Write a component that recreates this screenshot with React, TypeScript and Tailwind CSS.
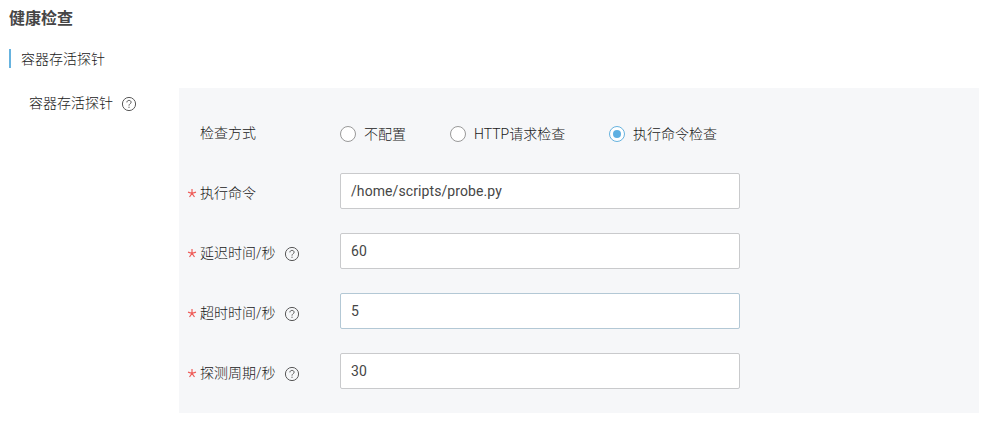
function Help() {
  return (
    <svg width="16" height="16" viewBox="0 0 16 16" fill="none" stroke="#595959" strokeWidth="1" className="shrink-0">
      <circle cx="8" cy="8" r="6.6" />
      <path d="M5.900 6.400C5.900 5.100 6.800 4.400 8 4.400s2.100.7 2.100 1.900C10.100 7.700 8 7.800 8 9.600M8 10.700v1.200" />
    </svg>
  );
}

function Required() {
  return (
    <svg width="10" height="10" viewBox="0 0 10 10" fill="none" stroke="#ee5f5b" strokeWidth="1.2" className="mr-[3px] -mt-px shrink-0">
      <path d="M5 1v4.300M1 4.100L5 5.300l4-1.200M2.500 9L5 5.300L7.500 9" />
    </svg>
  );
}

const radios = [
  { label: "不配置", width: "w-[110px]", checked: false },
  { label: "HTTP请求检查", width: "w-[159px]", checked: false },
  { label: "执行命令检查", width: "w-[120px]", checked: true },
];

const fields = [
  { label: "执行命令", value: "/home/scripts/probe.py", help: false, border: "border-[#c9cacc]" },
  { label: "延迟时间/秒", value: "60", help: true, border: "border-[#c9cacc]" },
  { label: "超时时间/秒", value: "5", help: true, border: "border-[#b3c8d5]" },
  { label: "探测周期/秒", value: "30", help: true, border: "border-[#c9cacc]" },
];

export default function App() {
  return (
    <main className="h-[423px] w-[992px] overflow-hidden bg-white font-[Roboto,'Noto_Sans_CJK_SC',sans-serif] text-sm leading-5 font-light text-[#181818]">
      <h1 className="pt-2 pl-[9px] text-base leading-[22px] font-bold text-[#464646]">健康检查</h1>
      <h2 className="mt-[19px] ml-[9px] h-[19px] border-l-2 border-[#67b3df] pl-[10px] leading-[21px]">容器存活探针</h2>
      <section className="mt-5 flex">
        <div className="flex h-8 w-[179px] items-center gap-2 pl-[29px]">
          <span className="-mt-0.5">容器存活探针</span><Help />
        </div>
        <div className="h-[325px] w-[800px] bg-[#f6f7f9] pt-[31px]">
          <div className="flex h-[30px] items-center">
            <div className="-mt-0.5 w-[161px] pl-[21px]">检查方式</div>
            {radios.map((r) => (
              <label key={r.label} className={`flex items-center gap-2 ${r.width}`}>
                <span className={`flex size-4 items-center justify-center rounded-full border bg-white ${r.checked ? "border-[#67b3df]" : "border-[#999999]"}`}>
                  {r.checked && <span className="size-2 rounded-full bg-[#5eb0e2]" />}
                </span>
                {r.label}
              </label>
            ))}
          </div>
          <div className="mt-6 flex flex-col gap-6">
            {fields.map((f) => (
              <div key={f.label} className="flex h-9 items-center">
                <div className="flex h-9 w-[161px] items-center pt-1 pl-2">
                  <Required />
                  <span className="mr-2">{f.label}</span>
                  {f.help && <span className="pt-0.5"><Help /></span>}
                </div>
                <div className={`flex h-9 w-[400px] items-center rounded-[2px] border bg-white px-[10px] font-normal tracking-[0.09px] text-[#464646] ${f.border}`}>{f.value}</div>
              </div>
            ))}
          </div>
        </div>
      </section>
    </main>
  );
}
